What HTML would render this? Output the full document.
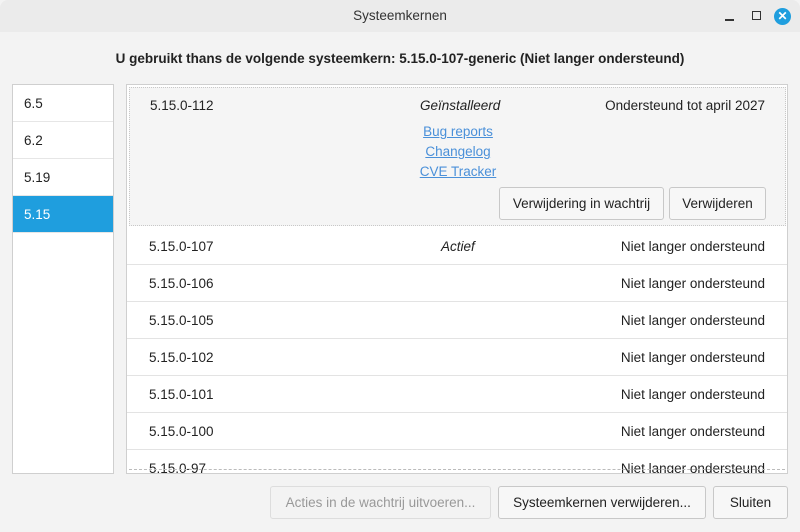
<!DOCTYPE html>
<html><head><style>
*{box-sizing:border-box;margin:0;padding:0}
body{width:800px;height:532px;background:#f3f3f3;font-family:"Liberation Sans",sans-serif;font-size:13.5px;color:#222;position:relative;overflow:hidden}
.title{position:absolute;left:0;top:0;width:800px;height:32px;background:#ebebeb;border-radius:8px 8px 0 0;text-align:center;line-height:32px;font-size:13.5px;color:#333}
.a{position:absolute}
.left{left:12px;top:84px;width:102px;height:390px;background:#fff;border:1px solid #cfcfcf}
.li{height:37px;line-height:37px;padding-left:11px;border-bottom:1px solid #e6e6e6}
.sel{background:#1f9ede;color:#fff}
.right{left:126px;top:84px;width:662px;height:390px;background:#fff;border:1px solid #cfcfcf;overflow:hidden}
.exp{position:absolute;left:2px;top:2px;width:657px;height:139px;background:#f5f5f5;border:1px dotted #c8c8c8}
.row{position:absolute;left:0;width:660px;height:37px;border-bottom:1px solid #e3e3e3}
.row span{position:absolute;top:11px}
.btn{position:absolute;height:33px;border:1px solid #c8c8c8;border-radius:3px;background:#f7f7f7;text-align:center;line-height:31px;font-size:13.5px}
.lnk{position:absolute;color:#4a90d9;text-decoration:underline;width:120px;text-align:center;left:268px}
</style></head><body>
<div class="title">Systeemkernen</div>
<div class="a" style="left:725px;top:19px;width:9px;height:1.5px;background:#333"></div>
<div class="a" style="left:752px;top:11px;width:9px;height:9px;border:1.5px solid #333"></div>
<div class="a" style="left:774px;top:8px;width:17px;height:17px;border-radius:50%;background:#1f9ede;color:#fff;font-weight:bold;font-size:12px;line-height:17px;text-align:center">✕</div>
<div class="a" style="left:0;width:800px;top:51px;text-align:center;font-weight:bold;font-size:13.5px">U gebruikt thans de volgende systeemkern: 5.15.0-107-generic (Niet langer ondersteund)</div>
<div class="a left">
<div class="li">6.5</div><div class="li">6.2</div><div class="li">5.19</div><div class="li sel">5.15</div>
</div>
<div class="a right">
<div class="exp">
<span class="a" style="left:20px;top:10px">5.15.0-112</span>
<span class="a" style="left:290px;top:10px;font-style:italic">Geïnstalleerd</span>
<span class="a" style="right:20px;top:10px">Ondersteund tot april 2027</span>
<span class="lnk" style="top:36px">Bug reports</span>
<span class="lnk" style="top:56px">Changelog</span>
<span class="lnk" style="top:76px">CVE Tracker</span>
<div class="btn" style="left:369px;top:99px;width:165px">Verwijdering in wachtrij</div>
<div class="btn" style="left:539px;top:99px;width:97px">Verwijderen</div>
</div>
<div class="row" style="top:143px"><span style="left:22px">5.15.0-107</span><span style="left:314px;font-style:italic">Actief</span><span style="right:22px">Niet langer ondersteund</span></div>
<div class="row" style="top:180px"><span style="left:22px">5.15.0-106</span><span style="right:22px">Niet langer ondersteund</span></div>
<div class="row" style="top:217px"><span style="left:22px">5.15.0-105</span><span style="right:22px">Niet langer ondersteund</span></div>
<div class="row" style="top:254px"><span style="left:22px">5.15.0-102</span><span style="right:22px">Niet langer ondersteund</span></div>
<div class="row" style="top:291px"><span style="left:22px">5.15.0-101</span><span style="right:22px">Niet langer ondersteund</span></div>
<div class="row" style="top:328px"><span style="left:22px">5.15.0-100</span><span style="right:22px">Niet langer ondersteund</span></div>
<div class="row" style="top:365px;border:0"><span style="left:22px">5.15.0-97</span><span style="right:22px">Niet langer ondersteund</span></div>
<div class="a" style="left:2px;top:384px;width:656px;border-top:1px dashed #bbb"></div>
</div>
<div class="btn" style="left:270px;top:486px;width:221px;color:#999;background:#f3f3f3;border-color:#ddd">Acties in de wachtrij uitvoeren...</div>
<div class="btn" style="left:498px;top:486px;width:208px">Systeemkernen verwijderen...</div>
<div class="btn" style="left:713px;top:486px;width:75px">Sluiten</div>
</body></html>
